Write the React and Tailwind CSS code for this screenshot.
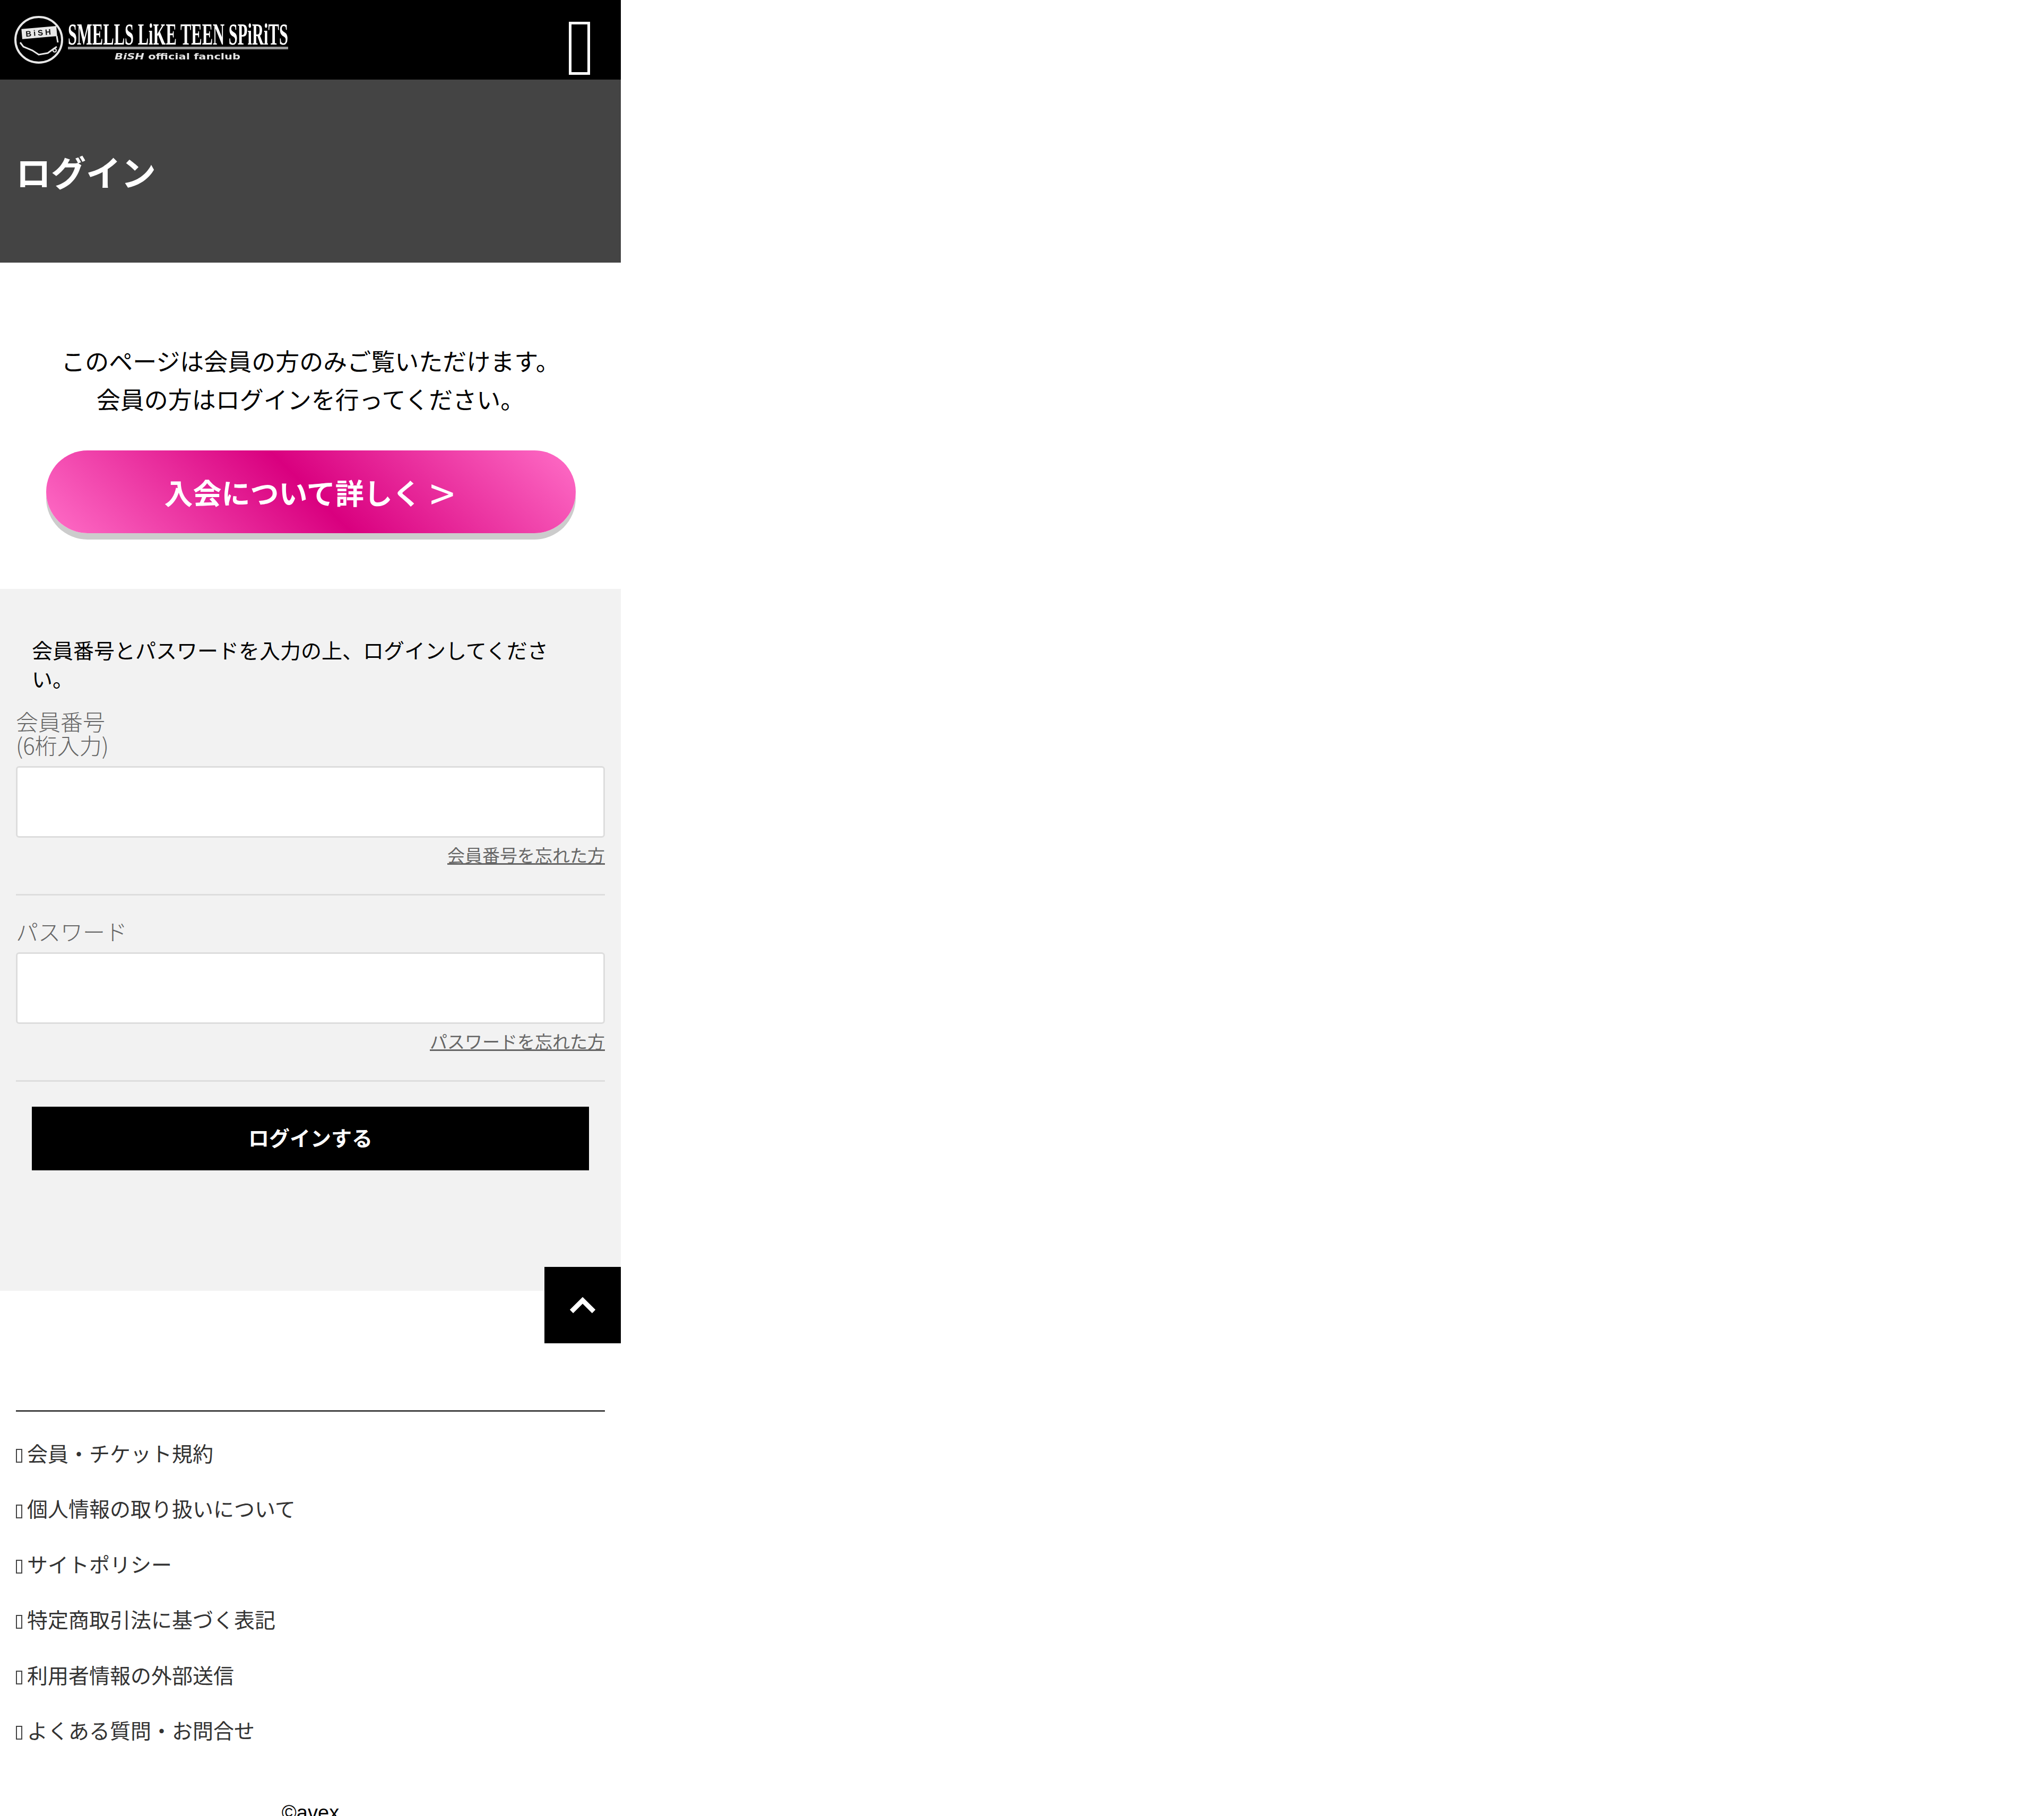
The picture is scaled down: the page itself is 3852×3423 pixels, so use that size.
import React from "react";

const footerLinks = [
  "会員・チケット規約",
  "個人情報の取り扱いについて",
  "サイトポリシー",
  "特定商取引法に基づく表記",
  "利用者情報の外部送信",
  "よくある質問・お問合せ",
];

// the mark and wordmark from the header
const Logo = () => (
  <svg width="560" height="150" viewBox="0 0 560 150" className="block blur-[0.7px]">
    <ellipse cx="73" cy="75" rx="44" ry="43" fill="none" stroke="#e8e8e8" strokeWidth="4" />
    <rect x="41" y="52" width="66" height="19" fill="#e8e8e8" transform="rotate(-5 73 61)" />
    <text x="74" y="67" textAnchor="middle" fontFamily="Liberation Sans" fontWeight="700" fontSize="15" letterSpacing="4" fill="#111" transform="rotate(-5 73 61)">BiSH</text>
    <path d="M38 80 L44 88 L61 95 L73 103 L90 100 L101 92 L107 88" fill="none" stroke="#e8e8e8" strokeWidth="3" />
    <path d="M107 68 L109 80" fill="none" stroke="#e8e8e8" strokeWidth="3" />
    <circle cx="103" cy="95" r="3" fill="none" stroke="#e8e8e8" strokeWidth="2" />
    <text x="128" y="84" fontFamily="Liberation Serif" fontWeight="700" fontSize="56" textLength="415" lengthAdjust="spacingAndGlyphs" fill="#ffffff">SMELLS LiKE TEEN SPiRiTS</text>
    <rect x="128" y="88" width="415" height="5" fill="#9a9a9a" />
    <text x="216" y="112" fontFamily="DejaVu Sans" fontWeight="700" fontSize="16" textLength="237" lengthAdjust="spacingAndGlyphs" fill="#e4e4e4">
      <tspan fontStyle="italic">BiSH</tspan> official fanclub
    </text>
  </svg>
);

const Field = ({ label, link, type }) => (
  <div>
    <label className="block text-[42px] leading-[45px] font-extralight text-[#666]">{label}</label>
    <input type={type} className="block w-full h-[135px] mt-[18px] bg-white border-[3px] border-[#ddd] rounded-[6px]" />
    <div className="mt-[10px] text-right text-[33px] leading-[45px]">
      <a href="#" className="text-[#666] underline">{link}</a>
    </div>
    <hr className="mt-[51px] border-0 border-t-[3px] border-[#ddd]" />
  </div>
);

const App = () => {
  return (
    <div className="relative w-[1170px] h-[3423px] overflow-hidden bg-white text-black font-['Noto_Sans_CJK_JP','Noto_Sans',sans-serif]">
      <header className="flex items-start justify-between h-[150px] bg-black pr-[58px]">
        <Logo />
        <span className="block w-[40px] h-[100px] mt-[41px] border-[5px] border-white" />
      </header>

      <div className="flex items-center h-[345px] pl-[30px] bg-[#444]">
        <h1 className="text-[66px] font-bold text-white">ログイン</h1>
      </div>

      <section className="h-[615px] pt-[149px]">
        <p className="text-center text-[45px] leading-[72px]">
          このページは会員の方のみご覧いただけます。
          <br />
          会員の方はログインを行ってください。
        </p>
        <a
          href="#"
          className="flex items-center justify-center w-[998px] h-[156px] mt-[61px] ml-[87px] pr-[6px] rounded-full bg-[linear-gradient(45deg,#ff6ec7,#d9007f_50%,#ff6ec7)] shadow-[0_12px_0_#ccc] text-[54px] font-bold text-white"
        >
          入会について詳しく
          <span className="ml-[16px] text-[84px] leading-none font-normal">&gt;</span>
        </a>
      </section>

      <section className="h-[1323px] px-[30px] pt-[87px] bg-[#f2f2f2]">
        <p className="px-[30px] text-[39px] leading-[54px]">
          会員番号とパスワードを入力の上、ログインしてください。
        </p>
        <form className="mt-[31px]">
          <Field
            label={<>会員番号<br />(6桁入力)</>}
            link="会員番号を忘れた方"
            type="text"
          />
          <div className="mt-[44px]">
            <Field label="パスワード" link="パスワードを忘れた方" type="password" />
          </div>
          <button
            type="button"
            className="block w-[1050px] h-[120px] mt-[47px] pb-[5px] mx-auto bg-black text-[39px] font-bold text-white"
          >
            ログインする
          </button>
        </form>
      </section>

      <a href="#" className="absolute top-[2388px] right-0 flex items-center justify-center w-[144px] h-[144px] bg-black">
        <svg width="50" height="32" viewBox="0 0 50 32">
          <path d="M4 28 L25 7 L46 28" fill="none" stroke="#fff" strokeWidth="9" />
        </svg>
      </a>

      <footer className="px-[30px] pt-[225px]">
        <ul className="border-t-[3px] border-[#444] pt-[25px]">
          {footerLinks.map((item) => (
            <li key={item} className="flex items-center h-[104.4px] text-[39px] text-[#333]">
              <span className="w-[12px] h-[26px] mt-[12px] mr-[9px] border-2 border-[#444]" />
              {item}
            </li>
          ))}
        </ul>
        <p className="mt-[78px] text-center text-[38px] leading-[54px] font-['Liberation_Sans',sans-serif]">©avex</p>
      </footer>
    </div>
  );
};

export default App;
